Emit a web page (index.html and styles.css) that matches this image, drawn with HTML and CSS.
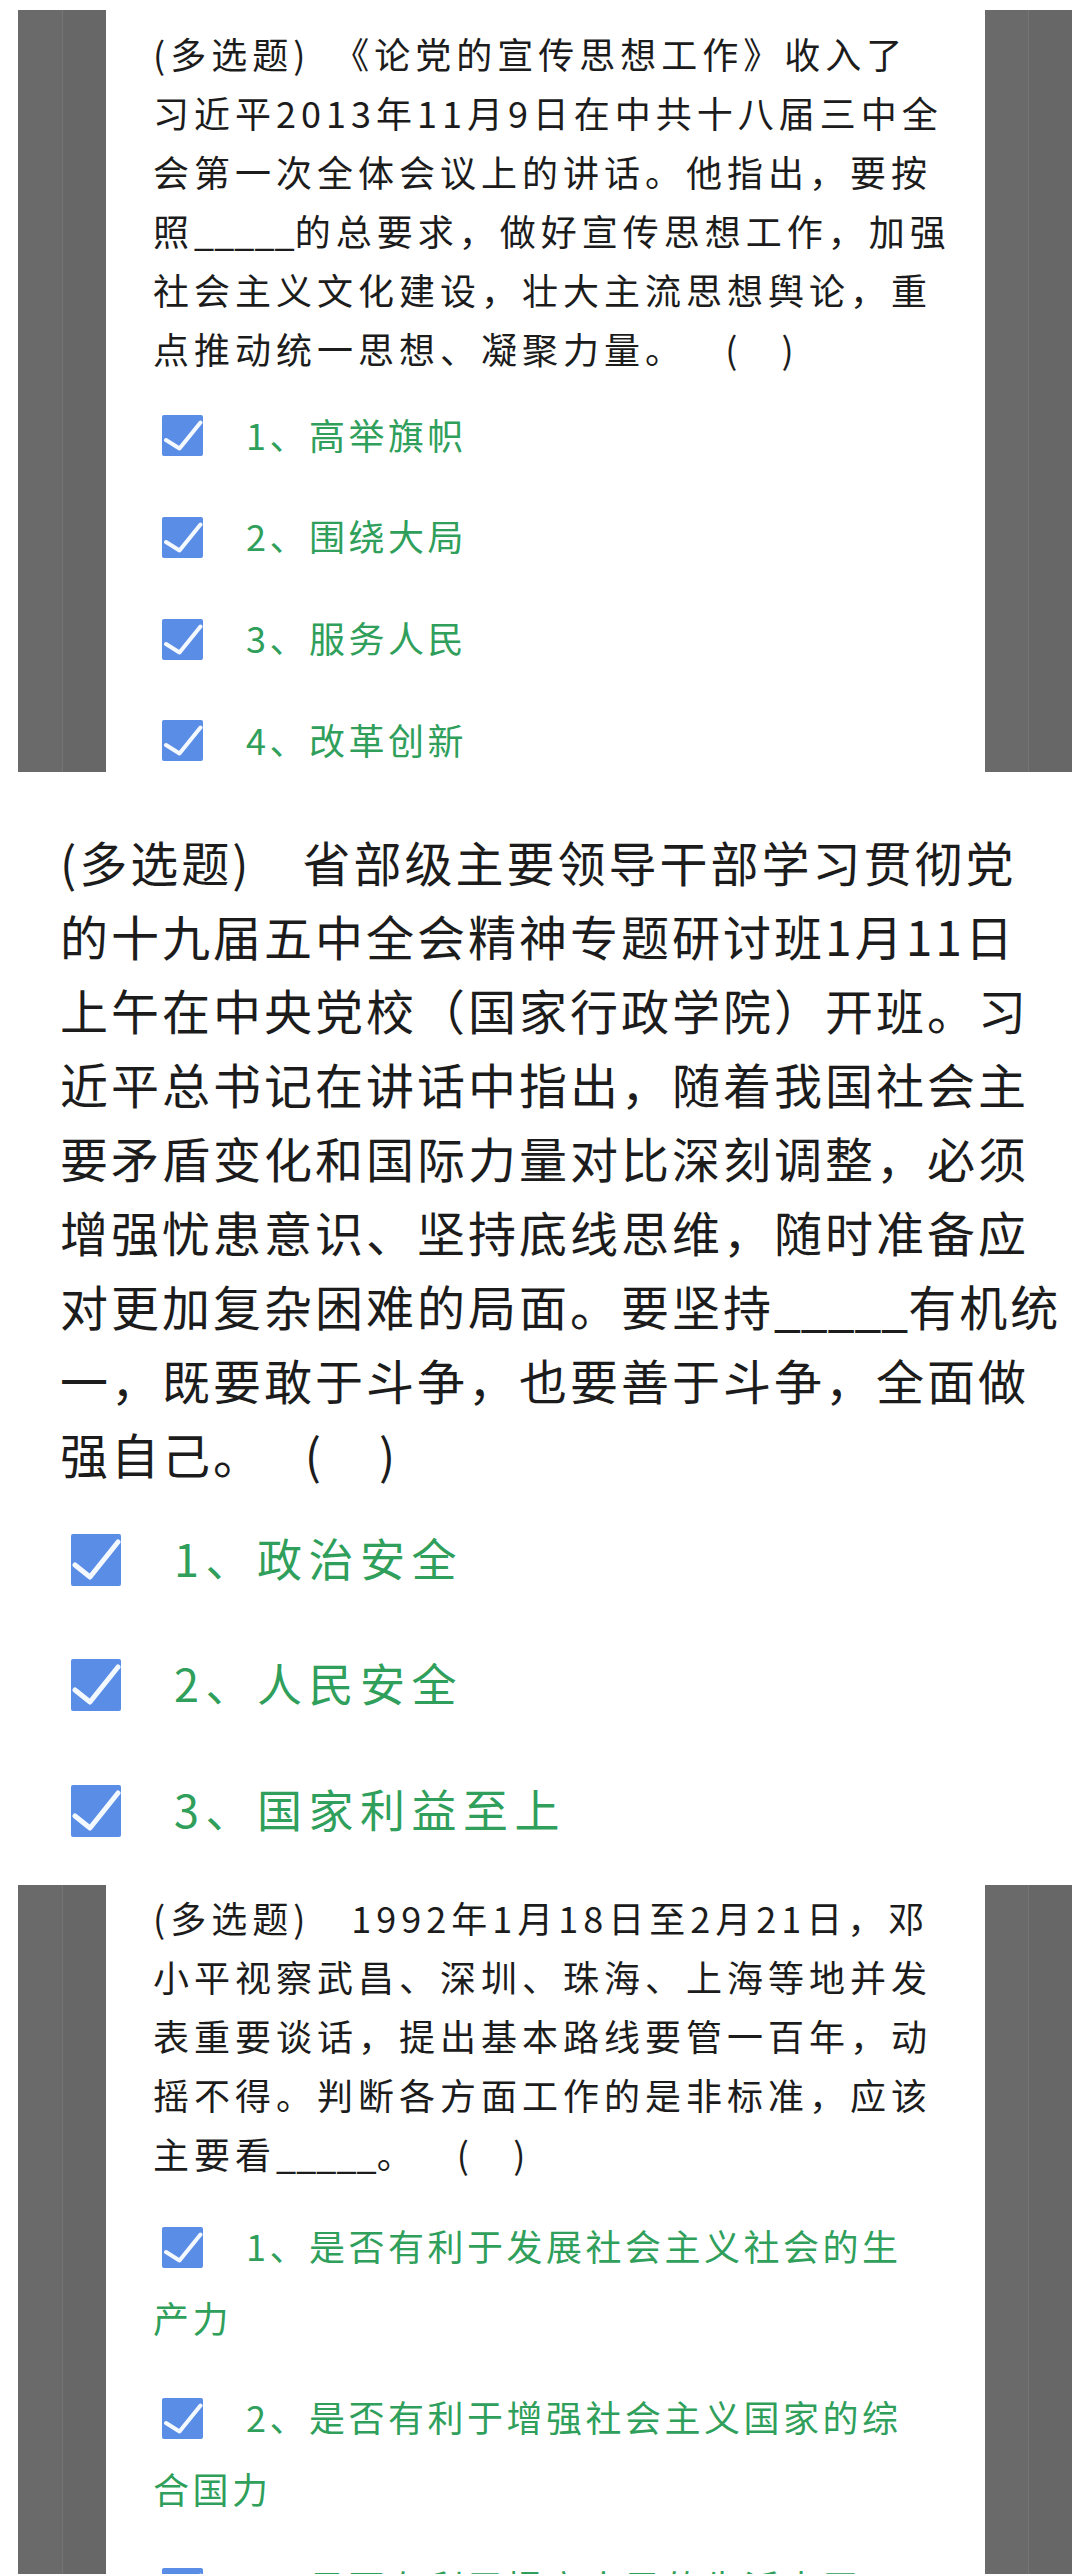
FILE: index.html
```html
<!DOCTYPE html>
<html lang="zh-CN">
<head>
<meta charset="utf-8">
<title>多选题</title>
<link rel="stylesheet" href="styles.css">
</head>
<body>
<section class="card card-top">
  <div class="bar"></div>
  <div class="sheet">
    <p class="q">(多选题)　《论党的宣传思想工作》收入了<br>习近平2013年11月9日在中共十八届三中全<br>会第一次全体会议上的讲话。他指出，要按<br>照<span class="blank">_____</span>的总要求，做好宣传思想工作，加强<br>社会主义文化建设，壮大主流思想舆论，重<br>点推动统一思想、凝聚力量。&nbsp;&nbsp;&nbsp;(&nbsp;&nbsp;&nbsp;)</p>
    <ul class="opts">
      <li class="opt"><svg class="box" viewBox="0 0 41 41"><rect width="41" height="41" rx="2" fill="#5a8de6"/><path d="M4 25 L17.5 33.5 L38.5 7.5" fill="none" stroke="#f4f8ff" stroke-width="4" stroke-linecap="round" stroke-linejoin="round"/></svg>1、高举旗帜</li>
      <li class="opt"><svg class="box" viewBox="0 0 41 41"><rect width="41" height="41" rx="2" fill="#5a8de6"/><path d="M4 25 L17.5 33.5 L38.5 7.5" fill="none" stroke="#f4f8ff" stroke-width="4" stroke-linecap="round" stroke-linejoin="round"/></svg>2、围绕大局</li>
      <li class="opt"><svg class="box" viewBox="0 0 41 41"><rect width="41" height="41" rx="2" fill="#5a8de6"/><path d="M4 25 L17.5 33.5 L38.5 7.5" fill="none" stroke="#f4f8ff" stroke-width="4" stroke-linecap="round" stroke-linejoin="round"/></svg>3、服务人民</li>
      <li class="opt"><svg class="box" viewBox="0 0 41 41"><rect width="41" height="41" rx="2" fill="#5a8de6"/><path d="M4 25 L17.5 33.5 L38.5 7.5" fill="none" stroke="#f4f8ff" stroke-width="4" stroke-linecap="round" stroke-linejoin="round"/></svg>4、改革创新</li>
    </ul>
  </div>
  <div class="bar bar-right"></div>
</section>

<section class="plain">
  <p class="q-lg">(多选题)　省部级主要领导干部学习贯彻党<br>的十九届五中全会精神专题研讨班1月11日<br>上午在中央党校（国家行政学院）开班。习<br>近平总书记在讲话中指出，随着我国社会主<br>要矛盾变化和国际力量对比深刻调整，必须<br>增强忧患意识、坚持底线思维，随时准备应<br>对更加复杂困难的局面。要坚持<span class="blank">_____</span>有机统<br>一，既要敢于斗争，也要善于斗争，全面做<br>强自己。　&nbsp;(&nbsp;&nbsp;&nbsp;&nbsp;)</p>
  <ul class="opts">
    <li class="opt-lg"><svg class="box-lg" viewBox="0 0 50 52"><rect width="50" height="52" rx="2" fill="#5a8de6"/><path d="M4 31 L19 43 L47 8" fill="none" stroke="#f4f8ff" stroke-width="5" stroke-linecap="round" stroke-linejoin="round"/></svg>1、政治安全</li>
    <li class="opt-lg"><svg class="box-lg" viewBox="0 0 50 52"><rect width="50" height="52" rx="2" fill="#5a8de6"/><path d="M4 31 L19 43 L47 8" fill="none" stroke="#f4f8ff" stroke-width="5" stroke-linecap="round" stroke-linejoin="round"/></svg>2、人民安全</li>
    <li class="opt-lg"><svg class="box-lg" viewBox="0 0 50 52"><rect width="50" height="52" rx="2" fill="#5a8de6"/><path d="M4 31 L19 43 L47 8" fill="none" stroke="#f4f8ff" stroke-width="5" stroke-linecap="round" stroke-linejoin="round"/></svg>3、国家利益至上</li>
  </ul>
</section>

<section class="card card-bottom">
  <div class="bar"></div>
  <div class="sheet">
    <p class="q">(多选题)　1992年1月18日至2月21日，邓<br>小平视察武昌、深圳、珠海、上海等地并发<br>表重要谈话，提出基本路线要管一百年，动<br>摇不得。判断各方面工作的是非标准，应该<br>主要看<span class="blank">_____</span>。&nbsp;&nbsp;&nbsp;(&nbsp;&nbsp;&nbsp;)</p>
    <ul class="opts opts-narrow">
      <li class="opt"><svg class="box" viewBox="0 0 41 41"><rect width="41" height="41" rx="2" fill="#5a8de6"/><path d="M4 25 L17.5 33.5 L38.5 7.5" fill="none" stroke="#f4f8ff" stroke-width="4" stroke-linecap="round" stroke-linejoin="round"/></svg>1、是否有利于发展社会主义社会的生产力</li>
      <li class="opt"><svg class="box" viewBox="0 0 41 41"><rect width="41" height="41" rx="2" fill="#5a8de6"/><path d="M4 25 L17.5 33.5 L38.5 7.5" fill="none" stroke="#f4f8ff" stroke-width="4" stroke-linecap="round" stroke-linejoin="round"/></svg>2、是否有利于增强社会主义国家的综合国力</li>
      <li class="opt"><svg class="box" viewBox="0 0 41 41"><rect width="41" height="41" rx="2" fill="#5a8de6"/><path d="M4 25 L17.5 33.5 L38.5 7.5" fill="none" stroke="#f4f8ff" stroke-width="4" stroke-linecap="round" stroke-linejoin="round"/></svg>3、是否有利于提高人民的生活水平</li>
    </ul>
  </div>
  <div class="bar bar-right"></div>
</section>
</body>
</html>
```

FILE: styles.css
```css
html, body {
  margin: 0;
  padding: 0;
  background: #ffffff;
}

body {
  width: 1080px;
  height: 2574px;
  overflow: hidden;
  font-family: "Noto Sans CJK SC", "Noto Sans", sans-serif;
  color: #1c1c1c;
}

/* screenshot panels framed by grey bars */
.card {
  display: flex;
  width: 1054px;
  margin-left: 18px;
}

.card-top {
  margin-top: 10px;
}

.card-bottom {
  margin-top: 39.3px;
  height: 689px;
  overflow: hidden;
}

.bar {
  flex: 0 0 88px;
  background: linear-gradient(90deg, #6a6a6a 0 44px, #757575 44px 45px, #676767 45px);
}

.bar-right {
  flex-basis: 87px;
  background: linear-gradient(90deg, #6a6a6a 0 43px, #757575 43px 44px, #676767 44px);
}

.sheet {
  flex: 1;
  padding: 14px 10px 0 47px;
  background: #ffffff;
}

.card-bottom .sheet {
  padding-top: 3px;
}

.q {
  margin: 0;
  font-size: 36px;
  line-height: 59px;
  letter-spacing: 5px;
}

.blank {
  letter-spacing: 0;
}

.opts {
  list-style: none;
  margin: 0;
  padding: 0;
}

.opts-narrow {
  padding-right: 50px;
}

.opt {
  font-size: 36px;
  letter-spacing: 3.5px;
  color: #2f9f5b;
}

.card-top .opt {
  line-height: 66px;
  margin-top: 35.7px;
}

.card-top .opt:first-child {
  margin-top: 22.5px;
}

.card-bottom .opt {
  line-height: 72px;
  margin-top: 26.5px;
}

.box {
  width: 41px;
  height: 41px;
  margin: 0 43px 0 9px;
  vertical-align: -6.8px;
}

/* full-width middle screenshot */
.plain {
  padding: 52.4px 0 0 60px;
}

.q-lg {
  margin: 0;
  font-size: 48px;
  line-height: 74px;
  letter-spacing: 3px;
}

.opt-lg {
  font-size: 45px;
  line-height: 74px;
  letter-spacing: 6.5px;
  color: #2f9f5b;
  margin-top: 51.5px;
}

.opt-lg:first-child {
  margin-top: 30.7px;
}

.box-lg {
  width: 50px;
  height: 52px;
  margin: 0 53px 0 11px;
  vertical-align: -9px;
}
```
